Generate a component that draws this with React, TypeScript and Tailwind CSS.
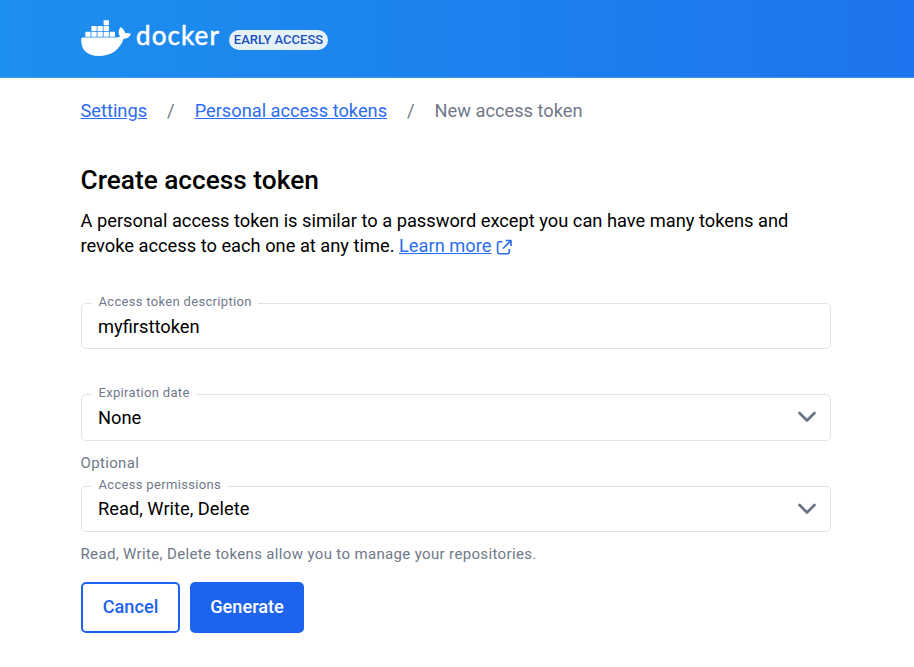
import React from "react";

function Whale() {
  return (
    <svg width="50" height="37" viewBox="0 0 50 37" fill="white" aria-hidden="true">
      <g>
        <rect x="22.6" y="0.2" width="5.3" height="5" rx="0.3" />
        <rect x="10.4" y="6" width="5.3" height="5" rx="0.3" />
        <rect x="16.5" y="6" width="5.3" height="5" rx="0.3" />
        <rect x="22.6" y="6" width="5.3" height="5" rx="0.3" />
        <rect x="4.3" y="11.7" width="5.3" height="5" rx="0.3" />
        <rect x="10.4" y="11.7" width="5.3" height="5" rx="0.3" />
        <rect x="16.5" y="11.7" width="5.3" height="5" rx="0.3" />
        <rect x="22.6" y="11.7" width="5.3" height="5" rx="0.3" />
        <rect x="28.7" y="11.7" width="5.3" height="5" rx="0.3" />
      </g>
      <path d="M1.6 17.4H34.5C36.2 17.4 37.9 17.1 39.1 16.4C37.1 14 37 10.5 39.3 7.5L40 7.3C42.4 9 43.7 10.8 44.1 13.2C46.1 12.7 48.3 13 49.9 14C48.8 17.1 46.2 18.8 42.6 18.8C38.8 29.8 30.5 36 17.5 36C7.5 36 0.2 31 0.2 20.3C0.2 18.3 0.6 17.4 1.6 17.4Z" />
    </svg>
  );
}

function Chevron({ className }: { className: string }) {
  return (
    <svg width="20" height="14" viewBox="0 0 20 14" fill="none" stroke="#677285" strokeWidth="2.6" strokeLinecap="round" strokeLinejoin="round" className={className}>
      <path d="M2.5 3L10 10.5L17.5 3" />
    </svg>
  );
}

function ExternalIcon() {
  return (
    <svg width="16" height="16" viewBox="0 0 16 16" fill="none" stroke="#2c6cf0" strokeWidth="1.6" strokeLinejoin="round" className="ml-[5px] mt-[3px]">
      <path d="M6.5 2.8H3.2Q1.6 2.8 1.6 4.4V13.1Q1.6 14.7 3.2 14.7H11.7Q13.3 14.7 13.3 13.1V10" />
      <path d="M9.6 1.5H15V6.9M14.8 1.7L7 9.5" />
    </svg>
  );
}

function Field({ label, value, box, chevron }: { label: string; value: string; box: string; chevron?: string }) {
  return (
    <div className={`relative flex w-[750px] items-center justify-between rounded-[5px] border border-[#e1e2e6] pl-4 pr-[13px] ${box}`}>
      <span className="absolute left-[10px] top-[-10px] bg-white pl-[6.5px] pr-[6.5px] text-[13px] leading-4 tracking-[0.32px] text-[#6f798a]">{label}</span>
      <span className="text-[18.29px] leading-6">{value}</span>
      {chevron && <Chevron className={chevron} />}
    </div>
  );
}

export default function App() {
  return (
    <div className="h-[667px] w-[914px] overflow-hidden bg-white font-['Roboto',sans-serif] text-black">
      <header className="flex h-[78px] items-start border-b border-[#4296f2] bg-gradient-to-r from-[#1d8fee] to-[#1d74ee] pl-[81px]">
        <div className="mt-5"><Whale /></div>
        <span className="ml-[5px] mt-[18px] w-[83px] font-[Lato,sans-serif] text-[26px] font-normal leading-[34px] tracking-[1.1px] text-white [-webkit-text-stroke:0.5px_white]">docker</span>
        <span className="ml-[10px] mt-[30px] flex h-5 w-[99px] items-center justify-center rounded-full bg-[#e5f2fc] text-[13px] font-medium text-[#1d4fbd]">EARLY ACCESS</span>
      </header>
      <main className="pl-[80.5px]">
        <nav className="flex pt-[21px] text-[18.24px] leading-6 text-[#6f798a]">
          <a className="text-[#2c6cf0] underline">Settings</a>
          <span className="mx-5">/</span>
          <a className="text-[#2c6cf0] underline">Personal access tokens</a>
          <span className="mx-5">/</span>
          <span>New access token</span>
        </nav>
        <h1 className="mt-[41px] text-[26.25px] font-medium leading-8">Create access token</h1>
        <div className="mt-3 text-[18.27px] leading-[25px]">
          <p className="whitespace-nowrap">A personal access token is similar to a password except you can have many tokens and</p>
          <p className="flex h-[25px] items-center whitespace-pre">revoke access to each one at any time. <a className="text-[#2c6cf0] underline">Learn more</a><ExternalIcon /></p>
        </div>
        <form className="mt-[45px]">
          <div className="pl-[0.5px]"><Field label="Access token description" value="myfirsttoken" box="h-[46px] pt-[2px]" /></div>
          <div className="h-[45px]" />
          <div className="pl-[0.5px]"><Field label="Expiration date" value="None" box="h-[47px]" chevron="mb-[2px]" /></div>
          <p className="mt-3 h-[33px] text-[15px] leading-5 tracking-[0.35px] text-[#6f798a]">Optional</p>
          <div className="pl-[0.5px]"><Field label="Access permissions" value="Read, Write, Delete" box="h-[46px]" chevron="mb-0" /></div>
          <p className="mt-3 text-[15px] leading-5 tracking-[0.35px] text-[#6f798a]">Read, Write, Delete tokens allow you to manage your repositories.</p>
          <div className="mt-[18px] flex gap-[10px] pl-[0.5px] text-[18.2px] font-medium">
            <button type="button" className="h-[51px] w-[99px] rounded-[5px] border-2 border-[#1d63ed] pb-[2px] text-[#1d63ed]">Cancel</button>
            <button type="button" className="h-[51px] w-[114px] rounded-[5px] bg-[#1d63ed] pb-[2px] text-white">Generate</button>
          </div>
        </form>
      </main>
    </div>
  );
}
